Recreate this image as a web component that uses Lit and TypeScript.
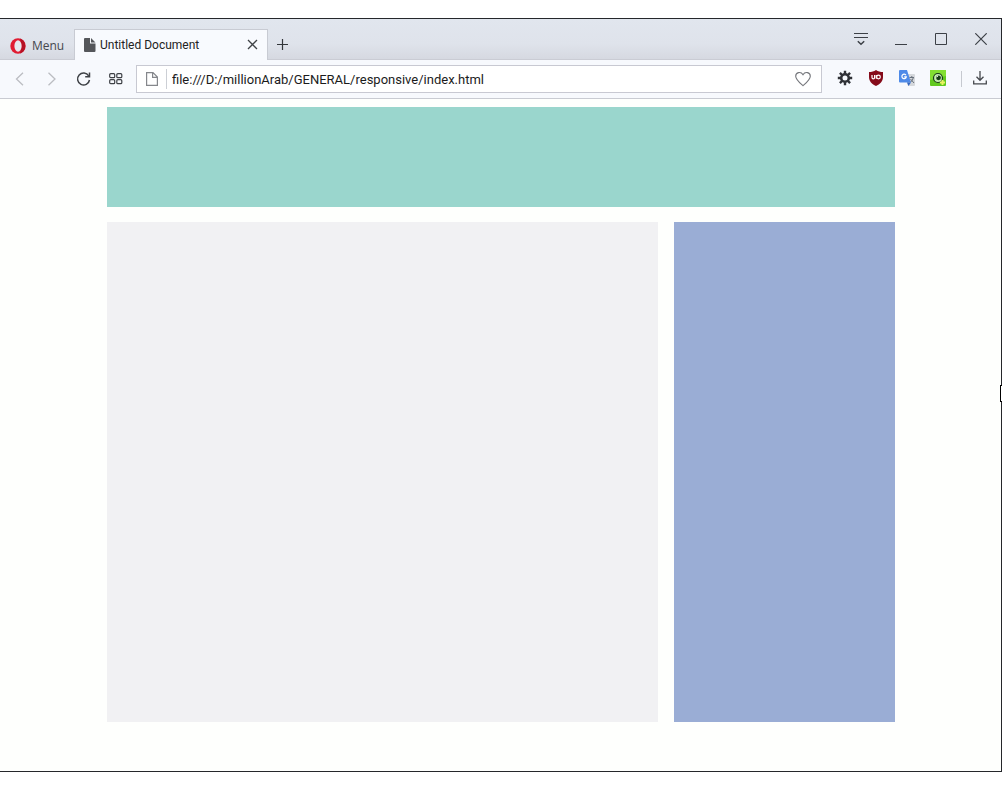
import { LitElement, html, css } from "lit";
import { customElement, property } from "lit/decorators.js";

@customElement("demo-page")
class DemoPage extends LitElement {
  static styles = css`
    :host { display: block; flex: 1; padding: 8px; background: #fefffd; }
    .container { width: 80%; margin: 0 auto; }
    .banner { height: 100px; margin-bottom: 15px; background: #9ad6cd; }
    .columns { display: flex; justify-content: space-between; }
    .content { width: 70%; height: 500px; background: #f1f1f3; }
    .side { width: 28%; height: 500px; background: #9aadd5; }
  `;

  render() {
    return html`
      <div class="container">
        <header class="banner"></header>
        <div class="columns">
          <main class="content"></main>
          <aside class="side"></aside>
        </div>
      </div>
    `;
  }
}

@customElement("app-root")
class AppRoot extends LitElement {
  @property() url = "file:///D:/millionArab/GENERAL/responsive/index.html";

  static styles = css`
    :host {
      display: block;
      box-sizing: border-box;
      height: 100vh;
      padding: 18px 0;
      background: #fff;
      font: 12px/16px Roboto, "Noto Sans", sans-serif;
      color: #222;
    }
    * { box-sizing: border-box; }
    svg { display: block; fill: none; }
    button {
      display: flex;
      align-items: center;
      justify-content: center;
      padding: 0;
      border: 0;
      background: none;
      font: inherit;
      color: inherit;
    }
    .window {
      position: relative;
      display: flex;
      flex-direction: column;
      height: 100%;
      border: solid #25272b;
      border-width: 1px 1px 1px 0;
    }
    .titlebar {
      display: flex;
      align-items: flex-end;
      height: 41px;
      background: linear-gradient(#e1e6ee, #dfe3eb 60%, #d5d8e0);
      box-shadow: inset 0 -1px #caccd4;
    }
    .menu {
      gap: 6px;
      width: 74px;
      height: 29px;
      font-family: "Open Sans", "Noto Sans", sans-serif;
      color: #45484e;
    }
    .tab {
      display: flex;
      align-items: center;
      width: 194px;
      height: 31px;
      padding: 0 6px 0 9px;
      border: 1px solid #c8cbd3;
      border-bottom: 0;
      background: #f8fafe;
    }
    .tab-title { flex: 1; margin-left: 4px; white-space: nowrap; }
    .new-tab { width: 30px; height: 30px; }
    .controls { display: flex; align-self: flex-start; margin-left: auto; }
    .control { width: 40px; height: 40px; }
    .toolbar {
      display: flex;
      align-items: center;
      height: 39px;
      padding: 0 6px 0 4px;
      border-bottom: 1px solid #c9cbd2;
      background: #f7f9fd;
    }
    .tool { width: 32px; height: 32px; }
    .address {
      display: flex;
      align-items: center;
      flex: 1;
      height: 28px;
      margin: 0 7px 0 4px;
      padding: 0 10px 0 8px;
      border: 1px solid #c8c9d2;
      background: #fff;
    }
    .url {
      flex: 1;
      min-width: 0;
      height: 20px;
      margin-left: 7px;
      padding: 1px 0 0 5px;
      border: 0;
      border-left: 1px solid #cccfd5;
      outline: 0;
      background: none;
      font: 13px/19px Roboto, "Noto Sans", sans-serif;
      color: #1b1b1b;
    }
    .ext { width: 31px; height: 32px; margin-bottom: 2px; }
    .rule { width: 1px; height: 16px; margin: 0 2px 0 8px; background: #c6c9d0; }
    .handle {
      position: absolute;
      top: 366px;
      right: -1px;
      width: 2px;
      height: 17px;
      border: solid #000;
      border-width: 1px 0 1px 1px;
      background: #fff;
    }
  `;

  renderTitleBar() {
    return html`
      <div class="titlebar">
        <button class="menu">
          <svg width="16" height="16" viewBox="0 0 16 16">
            <ellipse cx="8" cy="8" rx="7.7" ry="7.8" fill="#e01c32" />
            <path d="M10 .6a7.7 7.8 0 0 1 0 14.8L12 8z" fill="#b51225" />
            <ellipse cx="8" cy="8" rx="3.6" ry="5.8" fill="#e5e9ef" />
          </svg>
          <span>Menu</span>
        </button>
        <div class="tab">
          <svg width="12" height="14" viewBox="0 0 12 14">
            <path d="M0 1Q0 0 1 0H6V5.5H11.500V13Q11.500 14 10.500 14H1Q0 14 0 13zM7 0L11.500 4.500H7z" fill="#55575b" />
          </svg>
          <span class="tab-title">Untitled Document</span>
          <button aria-label="Close tab">
            <svg width="16" height="16" viewBox="0 0 16 16" stroke="#3f4246" stroke-width="1.3"><path d="M3 3l9 9M12 3l-9 9" /></svg>
          </button>
        </div>
        <button class="new-tab" aria-label="New tab">
          <svg width="12" height="12" viewBox="0 0 12 12" stroke="#33363a"><path d="M0 5.500h11M5.500 0v11" stroke-width="1.2" /></svg>
        </button>
        <div class="controls">
          <button class="control" aria-label="Tab menu">
            <svg width="14" height="14" viewBox="0 0 14 14" stroke="#3c4046"><path d="M0 1.500h14M0 5.500h14" /><path d="M3.800 9.300l3.200 3 3.200-3" stroke-width="1.5" /></svg>
          </button>
          <button class="control" aria-label="Minimize">
            <svg width="12" height="12" viewBox="0 0 12 12" stroke="#3c4046"><path d="M0 11.500h12" /></svg>
          </button>
          <button class="control" aria-label="Maximize">
            <svg width="12" height="12" viewBox="0 0 12 12" stroke="#3c4046"><path d="M.5.5h11v11H.5z" /></svg>
          </button>
          <button class="control" aria-label="Close window">
            <svg width="12" height="12" viewBox="0 0 12 12" stroke="#3c4046" stroke-width="1.2"><path d="M.3.3l11.400 11.400M11.700.3L.3 11.700" /></svg>
          </button>
        </div>
      </div>
    `;
  }

  renderToolbar() {
    return html`
      <nav class="toolbar">
        <button class="tool" aria-label="Back">
          <svg width="16" height="16" viewBox="0 0 16 16" stroke="#bbbdc2" stroke-width="1.3"><path d="M11 1.800L4.500 8l6.500 6.200" /></svg>
        </button>
        <button class="tool" aria-label="Forward">
          <svg width="16" height="16" viewBox="0 0 16 16" stroke="#bbbdc2" stroke-width="1.3"><path d="M4.500 1.800L11 8l-6.500 6.200" /></svg>
        </button>
        <button class="tool" aria-label="Reload">
          <svg width="16" height="16" viewBox="0 0 16 16" stroke="#3e4146" stroke-width="1.5"><path d="M12.700 4.800A6 6 0 1 0 13.500 9" /><path d="M13.500 1.500V5.800H9.200" /></svg>
        </button>
        <button class="tool" aria-label="Speed dial">
          <svg width="14" height="12" viewBox="0 0 14 12" stroke="#3e4146" stroke-width="1.2">
            <rect x=".7" y=".7" width="5" height="4" rx="1" /><rect x="7.800" y=".7" width="5" height="4" rx="1" />
            <rect x=".7" y="6.700" width="5" height="4" rx="1" /><rect x="7.800" y="6.700" width="5" height="4" rx="1" />
          </svg>
        </button>
        <div class="address">
          <svg width="14" height="16" viewBox="0 0 14 16" stroke="#85878c" stroke-width="1.2"><path d="M1.600 1.600H8l4.400 4.400V14.400H1.600zM7.600 1.600V6.400H12.400" /></svg>
          <input class="url" type="text" aria-label="Address" spellcheck="false" .value=${this.url} />
          <button aria-label="Bookmark">
            <svg width="16" height="16" viewBox="0 0 16 16" stroke="#74767b" stroke-width="1.100"><path d="M8 14.700C4 11.200.7 8.500.7 5.200.7 1.300 5.800.1 8 3.700 10.200.1 15.300 1.300 15.300 5.200c0 3.300-3.300 6-7.300 9.500z" /></svg>
          </button>
        </div>
        <button class="ext" aria-label="Settings">
          <svg width="16" height="16" viewBox="0 0 16 16">
            <circle cx="8" cy="8" r="3.800" stroke="#2f3136" stroke-width="2.600" />
            <path d="M8 .8v3M8 12.200v3M.8 8h3M12.200 8h3M2.900 2.900L5 5M11 11l2.100 2.100M13.100 2.900L11 5M5 11l-2.100 2.100" stroke="#2f3136" stroke-width="2.400" />
          </svg>
        </button>
        <button class="ext" aria-label="uBlock Origin">
          <svg width="16" height="16" viewBox="0 0 16 16">
            <path d="M8 0c2 1.400 4.500 2 7 2v5c0 4.500-3 7-7 9-4-2-7-4.500-7-9V2c2.500 0 5-.6 7-2z" fill="#850b1a" />
            <path d="M4 5v2.500a1.300 1.300 0 0 0 2.600 0V5M8.300 8.800V5" stroke="#fff" stroke-width="1.200" />
            <circle cx="10.500" cy="7" r="1.800" stroke="#fff" stroke-width="1.200" />
          </svg>
        </button>
        <button class="ext" aria-label="Translate">
          <svg width="16" height="16" viewBox="0 0 16 16">
            <path d="M6 4h9q1 0 1 1v10q0 1-1 1H9z" fill="#d5d8dc" />
            <path d="M1 0h7l4 12.500H1q-1 0-1-1V1q0-1 1-1z" fill="#4e8ae8" />
            <path d="M8 12.500h4L9.500 16z" fill="#3467c0" />
            <path d="M7 5.200A2.200 2.200 0 1 0 7.300 6.800H5.200" stroke="#fff" stroke-width="1.200" />
            <path d="M10.500 7.500H15M12.800 6v1.500M14.300 7.500c-.5 2.300-1.500 3.500-2.600 4.500M11.500 9l3.500 4" stroke="#68717c" />
          </svg>
        </button>
        <button class="ext" aria-label="Screen capture">
          <svg width="16" height="16" viewBox="0 0 16 16">
            <rect width="16" height="16" rx="1" fill="#61c91f" /><path d="M0 0h16v6L0 10z" fill="#82de32" />
            <circle cx="8" cy="8" r="4.500" fill="#c4ecae" stroke="#173b17" stroke-width="1.200" />
            <circle cx="8.500" cy="7.800" r="2.400" fill="#173b17" /><path d="M6.500 7l1.500-1" stroke="#fff" />
            <path d="M12.500 10v5M10 12.500h5" stroke="#eaf462" stroke-width="2" />
          </svg>
        </button>
        <span class="rule"></span>
        <button class="ext" aria-label="Downloads">
          <svg width="14" height="14" viewBox="0 0 14 14" stroke="#45484d" stroke-width="1.300"><path d="M7 0v9M3.500 5.800L7 9.300l3.500-3.500M.7 9.500v3.300h12.600V9.500" /></svg>
        </button>
      </nav>
    `;
  }

  render() {
    return html`
      <div class="window">
        ${this.renderTitleBar()} ${this.renderToolbar()}
        <demo-page></demo-page>
        <span class="handle"></span>
      </div>
    `;
  }
}
